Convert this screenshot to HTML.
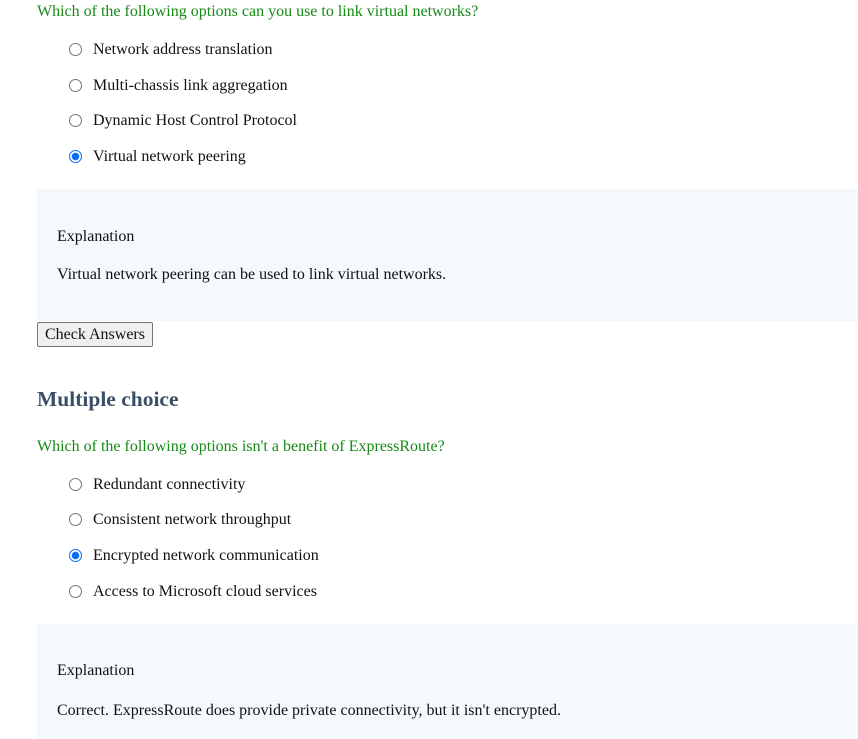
<!DOCTYPE html>
<html><head><meta charset="utf-8"><style>
body{margin:0;width:858px;height:739px;overflow:hidden;background:#fff;font-family:"Liberation Serif",serif;font-size:16px;color:#111;position:relative}
.t{position:absolute;white-space:nowrap;line-height:20px}
.q{color:#158a15;left:37px}
.o{left:93px}
.r{position:absolute;width:11px;height:11px;border:1px solid #767676;border-radius:50%;background:#fff}
.r.c{border-color:#0b6ef5;background:radial-gradient(circle,#0b6ef5 0 3.5px,#fff 4px)}
.box{position:absolute;left:37px;right:0;background:#f3f9fc}
.btn{position:absolute;left:37px;top:322px;width:114px;height:23px;border:1px solid #767676;border-radius:2px;background:#efefef;line-height:23px;text-align:center;font-size:16px}
h2{position:absolute;margin:0;left:37px;top:387px;font-size:21.5px;line-height:24px;color:#3a4f66;font-weight:bold}
</style></head><body>
<div class="t q" style="top:2px">Which of the following options can you use to link virtual networks?</div>
<div class="r" style="left:69px;top:43px"></div><div class="t o" style="top:40px">Network address translation</div>
<div class="r" style="left:69px;top:79px"></div><div class="t o" style="top:76px">Multi-chassis link aggregation</div>
<div class="r" style="left:69px;top:114px"></div><div class="t o" style="top:111px">Dynamic Host Control Protocol</div>
<div class="r c" style="left:69px;top:150px"></div><div class="t o" style="top:147px">Virtual network peering</div>
<div class="box" style="top:189px;height:132px"></div>
<div class="t" style="left:57px;top:227px">Explanation</div>
<div class="t" style="left:57px;top:265px">Virtual network peering can be used to link virtual networks.</div>
<div class="btn">Check Answers</div>
<h2>Multiple choice</h2>
<div class="t q" style="top:437px">Which of the following options isn't a benefit of ExpressRoute?</div>
<div class="r" style="left:69px;top:478px"></div><div class="t o" style="top:475px">Redundant connectivity</div>
<div class="r" style="left:69px;top:513px"></div><div class="t o" style="top:510px">Consistent network throughput</div>
<div class="r c" style="left:69px;top:549px"></div><div class="t o" style="top:546px">Encrypted network communication</div>
<div class="r" style="left:69px;top:585px"></div><div class="t o" style="top:582px">Access to Microsoft cloud services</div>
<div class="box" style="top:624px;height:115px"></div>
<div class="t" style="left:57px;top:661px">Explanation</div>
<div class="t" style="left:57px;top:701px">Correct. ExpressRoute does provide private connectivity, but it isn't encrypted.</div>
</body></html>
